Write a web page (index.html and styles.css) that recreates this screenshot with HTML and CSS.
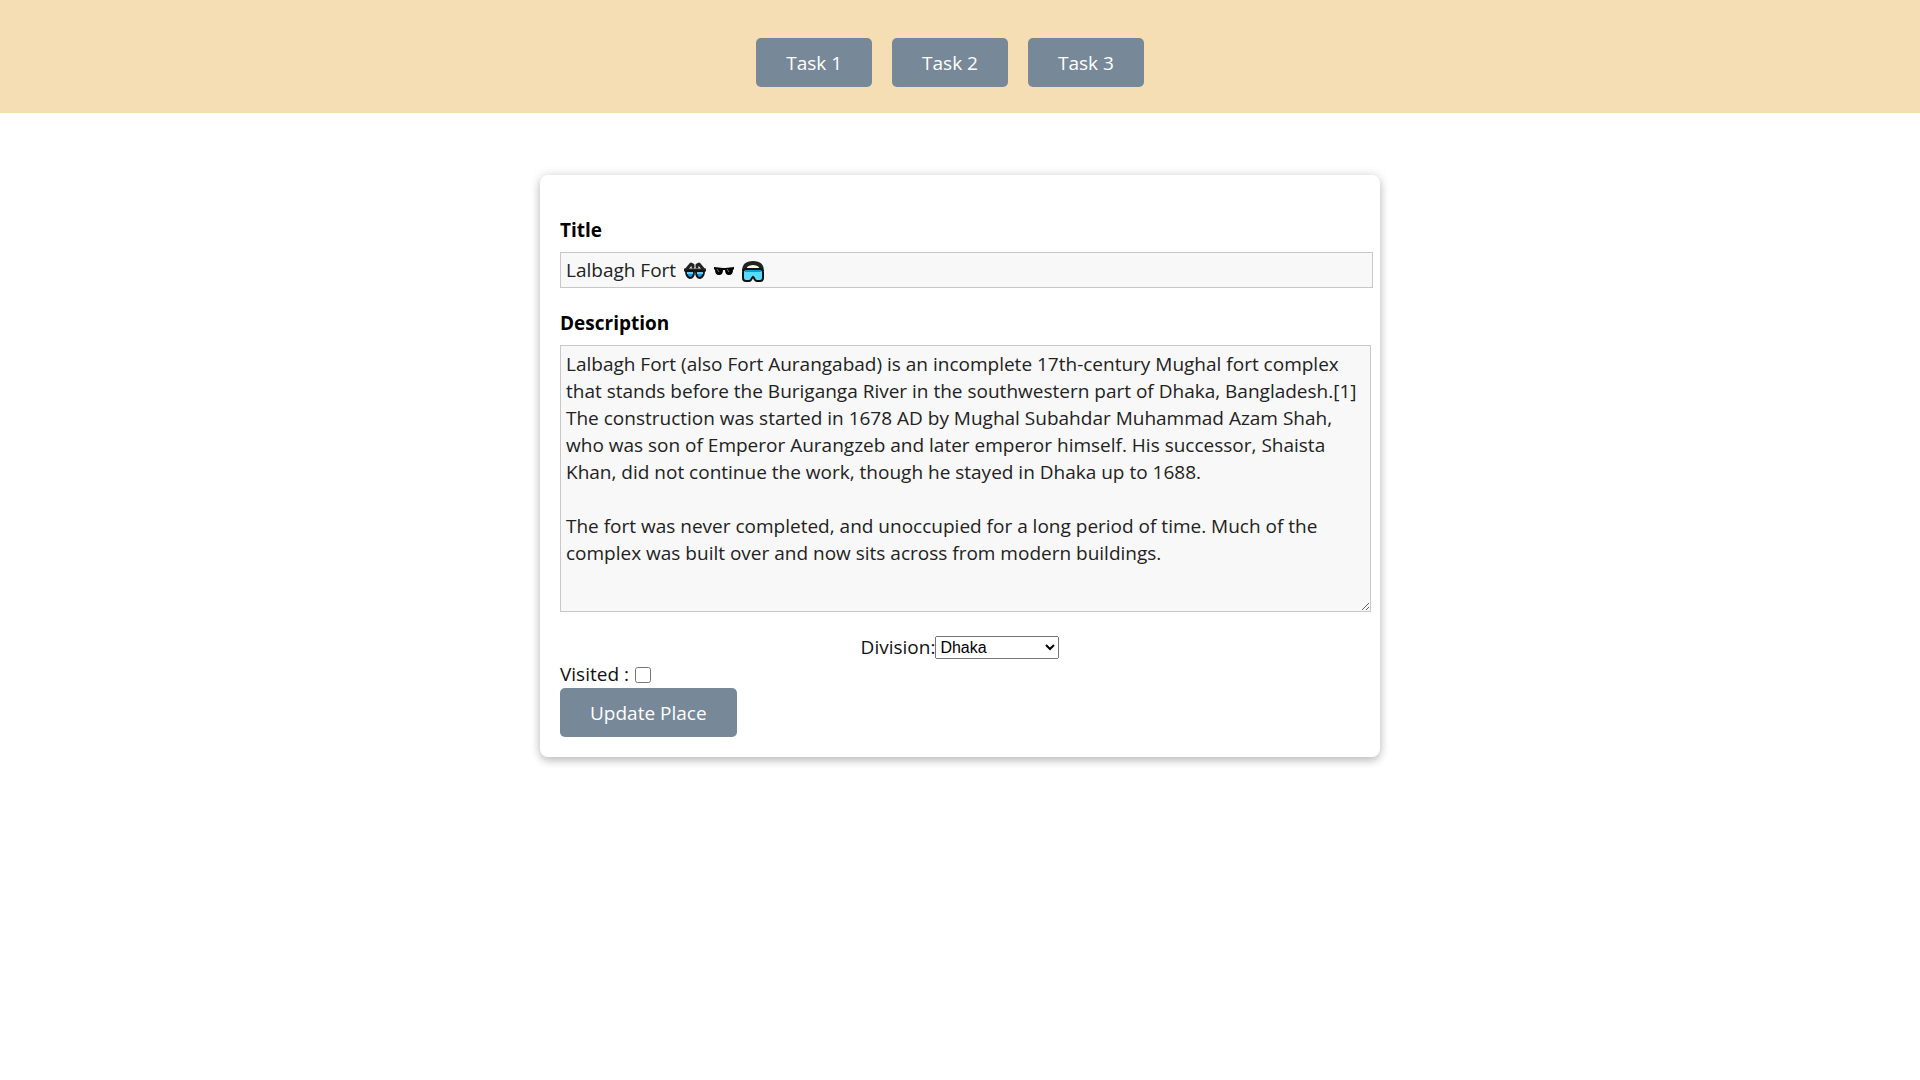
FILE: index.html
```html
<!DOCTYPE html>
<html lang="en">
<head>
<meta charset="utf-8">
<meta name="viewport" content="width=device-width, initial-scale=1">
<title>Update Place</title>
<link rel="stylesheet" href="styles.css">
</head>
<body>
<header class="header">
  <nav class="nav">
    <button class="btn" type="button">Task 1</button>
    <button class="btn" type="button">Task 2</button>
    <button class="btn" type="button">Task 3</button>
  </nav>
</header>
<main class="main">
  <form class="card">
    <div class="field">
      <label class="field-label" for="title">Title</label>
      <div class="title-box">
        <input class="title-input" id="title" type="text" size="8" value="Lalbagh Fort">
        <svg class="emoji" viewBox="0 0 24 24" aria-hidden="true">
          <path d="M3 11l5-6 2 1v2M21 11l-5-6-2 1v2" fill="none" stroke="#222" stroke-width="3" stroke-linejoin="round" stroke-linecap="round"/>
          <path d="M1 11h22" stroke="#222" stroke-width="3"/>
          <path d="M3 12h8q0 7-4 7-4-1-4-7zM13 12h8q0 6-4 7-4 0-4-7z" fill="#1795e0" stroke="#111" stroke-width="2" stroke-linejoin="round"/>
          <path d="M4 13h6v2H4zM14 13h6v2h-6z" fill="#63cdfa"/>
        </svg>
        <svg class="emoji" viewBox="0 0 24 24" aria-hidden="true">
          <path d="M2 8l9 1h2l9-1v2l-1 1q0 5-4 5t-4-5h-2q0 5-4 5t-4-5l-1-1z" fill="#000"/>
          <path d="m5 10 2 3M15 10l2 3" stroke="#777" stroke-width="1"/>
        </svg>
        <svg class="emoji" viewBox="0 0 24 24" aria-hidden="true">
          <path d="M3 12Q3 4 12 4t9 8" fill="none" stroke="#222" stroke-width="4"/>
          <path d="M4 10h16q2 1 2 3v6q0 3-3 3h-3q-2 0-3-3l-1-1-1 1q-1 3-3 3H5q-3 0-3-3v-6q0-2 2-3z" fill="#55dcff" stroke="#111" stroke-width="2"/>
          <path d="M4 12h16" stroke="#1298d8" stroke-width="2"/>
        </svg>
      </div>
    </div>
    <div class="field">
      <label class="field-label" for="description">Description</label>
      <textarea class="description" id="description" spellcheck="false">Lalbagh Fort (also Fort Aurangabad) is an incomplete 17th-century Mughal fort complex that stands before the Buriganga River in the southwestern part of Dhaka, Bangladesh.[1] The construction was started in 1678 AD by Mughal Subahdar Muhammad Azam Shah, who was son of Emperor Aurangzeb and later emperor himself. His successor, Shaista Khan, did not continue the work, though he stayed in Dhaka up to 1688.

The fort was never completed, and unoccupied for a long period of time. Much of the complex was built over and now sits across from modern buildings.</textarea>
    </div>
    <div class="division">
      <label for="division">Division:</label>
      <select class="division-select" id="division">
        <option>Dhaka</option>
      </select>
    </div>
    <div class="visited">
      <label for="visited">Visited :</label>
      <input class="visited-box" id="visited" type="checkbox">
    </div>
    <button class="btn" type="submit">Update Place</button>
  </form>
</main>
</body>
</html>
```
FILE: styles.css
```css
* {
  box-sizing: border-box;
}

body {
  margin: 0;
  background: #fff;
  color: #111;
  font: 400 19px/27px "Segoe UI", "Open Sans", sans-serif;
}

.header {
  padding: 38px 20px 26px 0;
  background: wheat;
}

.nav {
  display: flex;
  justify-content: center;
  gap: 20px;
}

.btn {
  padding: 12px 30px 10px;
  border: 0;
  border-radius: 5px;
  background: lightslategray;
  color: #fff;
  font: 500 19px/27px "Segoe UI", "Open Sans", sans-serif;
  cursor: pointer;
}

.main {
  padding: 62px 20px;
}

.card {
  max-width: 840px;
  margin: 0 auto;
  padding: 42px 7px 20px 20px;
  border-radius: 8px;
  box-shadow: 0 4px 8px rgba(0, 0, 0, 0.2), 0 0 12px rgba(0, 0, 0, 0.12);
}

.field {
  margin-bottom: 22px;
}

.field-label {
  display: block;
  margin-bottom: 8px;
  color: #000;
  font-weight: 700;
}

.title-box {
  display: flex;
  align-items: center;
  gap: 5px;
  height: 36px;
  padding: 1px 5px 0;
  border: 1px solid #c8c8c8;
  background: #f8f8f8;
}

.title-input {
  field-sizing: content;
  padding: 0 2px 0 0;
  border: 0;
  outline: 0;
  background: none;
  color: #222;
  font: inherit;
}

.emoji {
  width: 24px;
  height: 24px;
}

.description {
  display: block;
  width: calc(100% - 2px);
  height: 267px;
  padding: 5px;
  border: 1px solid #c8c8c8;
  background: #f8f8f8;
  color: #222;
  font: inherit;
  resize: both;
}

.division {
  display: flex;
  justify-content: center;
  align-items: center;
  padding-right: 13px;
}

.division-select {
  width: 124px;
  height: 23px;
  font: 400 16px "Liberation Sans", Arial, sans-serif;
}

.visited {
  display: flex;
  align-items: center;
  gap: 6px;
}

.visited-box {
  width: 16px;
  height: 16px;
  margin: 0;
}
```
